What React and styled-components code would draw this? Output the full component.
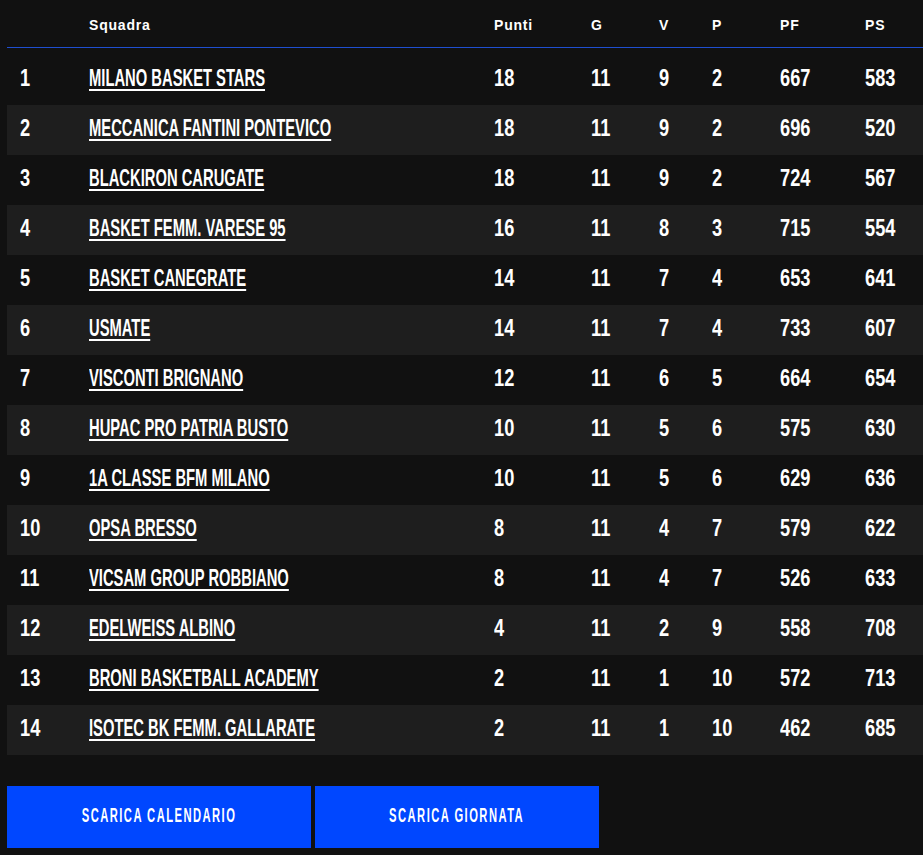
import React from 'react';
import styled, { createGlobalStyle } from 'styled-components';

const Global = createGlobalStyle`
  html, body { margin: 0; padding: 0; background: #111111; }
  body { font-family: "Liberation Sans", Arial, sans-serif; color: #ffffff; }
`;

const COLS = '69px 405px 97px 68px 53px 68px 85px 1fr';

const Page = styled.div`
  width: 923px;
  box-sizing: border-box;
  padding: 0 0 7px 7px;
  overflow: hidden;
`;

const Table = styled.div`
  display: flex;
  flex-direction: column;
`;

const HeaderRow = styled.div`
  display: grid;
  grid-template-columns: ${COLS};
  height: 47px;
  align-items: center;
  border-bottom: 1px solid #1f4fd0;
  margin-bottom: 7px;
`;

const HeadCell = styled.div`
  padding-left: 13px;
  padding-top: 3px;
  font-family: "Liberation Sans", Arial, sans-serif;
  font-weight: 700;
  font-size: 14px;
  letter-spacing: 0.8px;
  color: #ffffff;
`;

const Row = styled.div`
  display: grid;
  grid-template-columns: ${COLS};
  height: 50px;
  align-items: center;
  background: ${(p) => (p.$striped ? '#1e1e1e' : 'transparent')};
`;

const Cell = styled.div`
  padding-left: 13px;
  padding-bottom: 4px;
  white-space: nowrap;
`;

const Num = styled.span`
  display: inline-block;
  font-family: "Liberation Sans", Arial, sans-serif;
  font-weight: 700;
  font-size: 24px;
  line-height: 1;
  color: #ffffff;
  transform: scaleX(0.76);
  transform-origin: left center;
`;

const TeamName = styled.a`
  display: inline-block;
  font-family: "Liberation Sans", Arial, sans-serif;
  font-weight: 700;
  font-size: 24px;
  line-height: 1;
  color: #ffffff;
  text-transform: uppercase;
  text-decoration: underline;
  text-decoration-thickness: 2px;
  text-underline-offset: 3px;
  transform: scaleX(0.615);
  transform-origin: left center;
  cursor: pointer;
`;

const Buttons = styled.div`
  display: flex;
  gap: 4px;
  margin-top: 31px;
`;

const Button = styled.button`
  width: ${(p) => p.$w}px;
  height: 62px;
  background: #0047ff;
  border: none;
  padding: 0 0 3px;
  display: flex;
  align-items: center;
  justify-content: center;
  cursor: pointer;
`;

const ButtonLabel = styled.span`
  display: inline-block;
  font-family: "Liberation Sans", Arial, sans-serif;
  font-weight: 700;
  font-size: 20px;
  letter-spacing: 2.6px;
  color: #ffffff;
  white-space: nowrap;
  transform: scaleX(0.56);
  transform-origin: center center;
`;

const data = [
  [1, 'Milano Basket Stars', 18, 11, 9, 2, 667, 583],
  [2, 'Meccanica Fantini Pontevico', 18, 11, 9, 2, 696, 520],
  [3, 'Blackiron Carugate', 18, 11, 9, 2, 724, 567],
  [4, 'Basket Femm. Varese 95', 16, 11, 8, 3, 715, 554],
  [5, 'Basket Canegrate', 14, 11, 7, 4, 653, 641],
  [6, 'Usmate', 14, 11, 7, 4, 733, 607],
  [7, 'Visconti Brignano', 12, 11, 6, 5, 664, 654],
  [8, 'Hupac Pro Patria Busto', 10, 11, 5, 6, 575, 630],
  [9, '1A Classe BFM Milano', 10, 11, 5, 6, 629, 636],
  [10, 'Opsa Bresso', 8, 11, 4, 7, 579, 622],
  [11, 'Vicsam Group Robbiano', 8, 11, 4, 7, 526, 633],
  [12, 'Edelweiss Albino', 4, 11, 2, 9, 558, 708],
  [13, 'Broni Basketball Academy', 2, 11, 1, 10, 572, 713],
  [14, 'Isotec BK Femm. Gallarate', 2, 11, 1, 10, 462, 685],
];

const headers = ['', 'Squadra', 'Punti', 'G', 'V', 'P', 'PF', 'PS'];

export default function App() {
  return (
    <Page>
      <Global />
      <Table>
        <HeaderRow>
          {headers.map((h, i) => (
            <HeadCell key={i}>{h}</HeadCell>
          ))}
        </HeaderRow>
        {data.map((r, i) => (
          <Row key={r[0]} $striped={i % 2 === 1}>
            <Cell><Num>{r[0]}</Num></Cell>
            <Cell><TeamName>{r[1]}</TeamName></Cell>
            {r.slice(2).map((v, j) => (
              <Cell key={j}><Num>{v}</Num></Cell>
            ))}
          </Row>
        ))}
      </Table>
      <Buttons>
        <Button $w={304}><ButtonLabel>SCARICA CALENDARIO</ButtonLabel></Button>
        <Button $w={284}><ButtonLabel>SCARICA GIORNATA</ButtonLabel></Button>
      </Buttons>
    </Page>
  );
}
